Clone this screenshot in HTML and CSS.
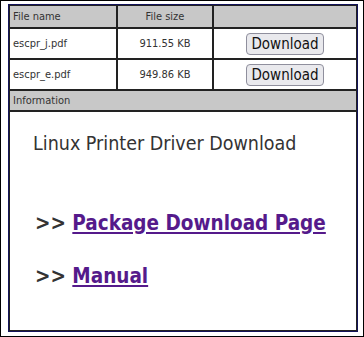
FILE: index.html
```html
<!DOCTYPE html>
<html>
<head>
<meta charset="utf-8">
<link rel="stylesheet" href="styles.css">
</head>
<body>
<div class="frame">
  <div class="outer">
    <div class="inner">
      <table class="files">
        <colgroup>
          <col class="c1"><col class="c2"><col class="c3">
        </colgroup>
        <tr class="head">
          <td>File name</td>
          <td class="center">File size</td>
          <td class="last"></td>
        </tr>
        <tr class="data">
          <td>escpr_j.pdf</td>
          <td class="center">911.55 KB</td>
          <td class="last center"><button class="btn" type="button">Download</button></td>
        </tr>
        <tr class="data">
          <td>escpr_e.pdf</td>
          <td class="center">949.86 KB</td>
          <td class="last center"><button class="btn" type="button">Download</button></td>
        </tr>
        <tr class="head info">
          <td colspan="3" class="last">Information</td>
        </tr>
        <tr class="content">
          <td colspan="3" class="last bottom">
            <div class="title">Linux Printer Driver Download</div>
            <div class="linkline pkg">&gt;&gt; <a href="#">Package Download Page</a></div>
            <div class="linkline man">&gt;&gt; <a href="#">Manual</a></div>
          </td>
        </tr>
      </table>
    </div>
  </div>
</div>
</body>
</html>
```

FILE: styles.css
```css
html, body {
  margin: 0;
  padding: 0;
  background: #fff;
}
.frame {
  box-sizing: border-box;
  width: 364px;
  height: 337px;
  border: 1px solid #000;
  padding: 3px 5px 0 7px;
  font-family: "DejaVu Sans Condensed", "DejaVu Sans", sans-serif;
  font-stretch: condensed;
  color: #333;
}
.outer {
  border: 1px solid #14145a;
  width: 348px;
}
.inner {
  border: 1px solid #222;
}
.files {
  width: 100%;
  border-collapse: separate;
  border-spacing: 0;
  table-layout: fixed;
  font-size: 11px;
}
.c1 { width: 108px; }
.c2 { width: 96px; }
.files td {
  padding: 0 3px;
  border-right: 2px solid #222;
  border-bottom: 2px solid #222;
  vertical-align: middle;
  color: #333;
}
.files td.last { border-right: none; }
.files td.bottom { border-bottom: none; }
.files td.center { text-align: center; }
.head td {
  background: #c8c8c8;
  height: 21px;
}
.data td {
  height: 29px;
}
.info td {
  height: 19px;
}
.btn {
  font-family: "DejaVu Sans Condensed", "DejaVu Sans", sans-serif;
  font-size: 15px;
  color: #111;
  width: 78px;
  height: 22px;
  padding: 0;
  background: #e9e9ed;
  border: 1px solid #8f8f9d;
  border-radius: 4px;
  line-height: 20px;
}
.content td {
  height: 198px;
  vertical-align: top;
  padding: 20px 0 0 23px;
}
.title {
  font-size: 19.5px;
  line-height: 24px;
  color: #333;
}
.linkline {
  font-size: 20.5px;
  line-height: 24px;
  font-weight: bold;
  color: #333;
  padding-left: 2px;
}
.pkg { margin-top: 55px; }
.man { margin-top: 29px; }
.linkline a {
  color: #551a8b;
  text-decoration: underline;
}
```
